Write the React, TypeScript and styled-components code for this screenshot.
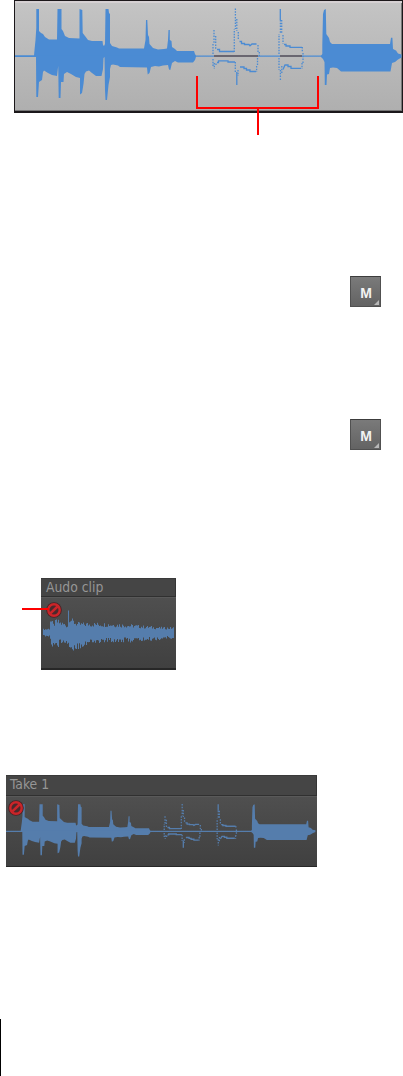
import { Fragment } from 'react'
import styled, { createGlobalStyle } from 'styled-components'

const SOLID_LEFT =
  'M15 55.6H34L34.5 50L35.5 40L36.3 28V9H39V31L41 33L43 34L45 37L49 39.5H57L57.5 9H61.5V29L63 31L65 36L69 38L79.5 38.5V9L82.3 10L82.7 33L85 36L88 40L92 41H102.5L103 45L104 46L105 44L105.5 9H108.5L109 13L110 14V43L112 46L117 47.5L119 48.5H144L145.5 40L146 20H147.3L148 35L149 37L149.5 44L153 48L158 49.5L164 49L167 48.5L168 40L168.5 30H169.8V40L171.5 41L172 47L175 49L177 51H194L195 54L196 55.8V56.8L195 60L193 62.5H178L175 61L172 63L170.3 70L169 69.5L168 65L163 65.5L159 66.5L155 66L151 67L149.5 73L147.7 74.5L147 67.5L120 67L118 65.5L113 64.5L111 65L110 69V77L108.5 85L107 100H105.5L105 90L104.5 57L103.5 58L103 69L101.5 76H96L92 73L89 70.5L86 71.5L84.5 74L83.5 84L82 93L80 94.5V78L76 77L71 74L67 72L64 74L63.5 82H61L60.5 98H58.7L58.2 66L57 76L52 75L48 73L44 70.5L43 72L42 80L39 82L38 97H36.3L36 57H15Z'

const SOLID_RIGHT =
  'M321 55.8L322.3 54V45L323 14L324 10L325.8 9L326.3 34L329 38L330 42L332 44H390L391 37.8H392.4L393 49L396 50.5L398 53.5L401.5 54.5V57.5L398 59.5L395 62L392 63L390.5 71.5H341L337 68L333 67.5L330 68L329 74L327 74.5L326.5 85H324.8L324.5 62L323 59L321 57Z'

const DOTS =
  'M213 54V43.5 M214 30V44 M215.7 36V49 M213 59V66 M214.3 63V69 M216 63.5V66 M234.3 52V29 M235.4 8.5V29 M236.8 19V31 M238.3 32V40 M235.3 62V73 M238 70V76 M258 45V52 M259.3 52V56 M257.5 58V66 M256.6 66V72 M279 54V34 M280.4 20V34 M281.7 20V34 M283 35V44 M279 58V70 M280.4 70V81 M281.8 66V74 M302.3 47V52 M303 53V63 M302 63V69'

const STEPS =
  'M217 49.5H219.5V51.5H234 M239.5 41.5H241.5V43.5H244.5V44.5H249L250 45.8L252 44H256.5 M217 62.5H218.5V60.8H228V62H235 M236.8 72V85 M240 67H244V68.5H246.5V70H250V71.5H256 M280.3 9V20 M284 44.5H286V46H290V47.3H302 M283 69.5L285 65H288V66.5H291V68.3H301'

const MUTED_SPANS = 'M214 56H258 M280 56H302'

const topEnvelope: [number, number][] = [
  [0, 4], [6, 5], [7, 17], [10, 10], [13, 15], [18, 12], [24, 9], [25, 22],
  [27, 19], [29, 15], [34, 11], [57, 11], [77, 10], [97, 8], [117, 6], [131, 6],
]
const bottomEnvelope: [number, number][] = [
  [0, 4], [6, 5], [8, 14], [14, 16], [20, 9], [26, 17], [30, 19], [37, 16],
  [47, 12], [67, 10], [87, 10], [107, 9], [131, 6],
]

const sample = (points: [number, number][], x: number) => {
  const i = Math.max(1, points.findIndex(([px]) => px >= x))
  const [x0, y0] = points[i - 1]
  const [x1, y1] = points[i]
  return y0 + ((y1 - y0) * (x - x0)) / (x1 - x0)
}

const noise = (n: number) => {
  const v = Math.sin(n * 12.9898) * 43758.5453
  return v - Math.floor(v)
}

const noisePath = Array.from({ length: 131 }, (_, x) => {
  const top = sample(topEnvelope, x) * (x === 25 ? 1 : 0.5 + 0.45 * noise(x + 1))
  const bottom = sample(bottomEnvelope, x) * (0.48 + 0.52 * noise(x + 300))
  return `M${x + 0.5} ${(34.5 - top).toFixed(1)}V${(34.5 + bottom).toFixed(1)}`
}).join('')

function TakeWave({ color, muted }: { color: string; muted?: boolean }) {
  return (
    <Fragment>
      <path d={SOLID_LEFT} fill={color} />
      <path d={SOLID_RIGHT} fill={color} />
      <WaveLine d="M15 56.2H322" $color={color} $width={1.2} />
      {muted && <WaveLine d={MUTED_SPANS} $color="#696670" $width={1.8} />}
      <WaveLine d={DOTS} $color={color} $width={1.3} $dotted />
      <WaveLine d={STEPS} $color={color} $width={1.3} />
    </Fragment>
  )
}

function MutedBadge() {
  return (
    <Badge viewBox="0 0 16 16">
      <circle cx="8" cy="8" r="7.8" fill="#492326" />
      <circle cx="8" cy="8" r="5.7" fill="#4a292c" stroke="#cb2529" strokeWidth="2.4" />
      <path d="M4.4 11.4L11.5 4.5" stroke="#cb2529" strokeWidth="2.5" />
    </Badge>
  )
}

function MuteButton() {
  return (
    <Mute type="button">
      M
      <Corner viewBox="0 0 5 5">
        <path d="M5 0V5H0Z" fill="#b8b8b8" />
      </Corner>
    </Mute>
  )
}

export default function App() {
  return (
    <Page>
      <GlobalStyle />
      <EventPanel>
        <Canvas viewBox="15 1 387 110" preserveAspectRatio="none">
          <TakeWave color="#4b8bd3" muted />
        </Canvas>
        <Bracket />
        <BracketStem />
      </EventPanel>
      <ButtonSlot $top={163}>
        <MuteButton />
      </ButtonSlot>
      <ButtonSlot $top={112}>
        <MuteButton />
      </ButtonSlot>
      <Clip $width={135} $height={92} $left={41} $top={128}>
        <ClipTitle $height={19} $inset={5}>Audo clip</ClipTitle>
        <ClipBody>
          <ClipCanvas viewBox="-2 0 135 69">
            <path d="M0 34.5H131" stroke="#557dac" strokeWidth="5" />
            <path d={noisePath} stroke="#557dac" strokeWidth="1.05" />
          </ClipCanvas>
          <BadgeSlot $left={5} $top={4}>
            <MutedBadge />
          </BadgeSlot>
          <Pointer />
        </ClipBody>
      </Clip>
      <Clip $width={311} $height={92} $left={6} $top={105}>
        <ClipTitle $height={21} $inset={4}>Take 1</ClipTitle>
        <ClipBody>
          <ClipCanvas viewBox="0 0 311 69">
            <g transform="translate(-12.6 2.2) scale(0.802 0.572)">
              <TakeWave color="#557dac" />
            </g>
          </ClipCanvas>
          <BadgeSlot $left={2} $top={3}>
            <MutedBadge />
          </BadgeSlot>
        </ClipBody>
      </Clip>
      <MarginRule />
    </Page>
  )
}

const GlobalStyle = createGlobalStyle`
  * {
    box-sizing: border-box;
  }

  body {
    margin: 0;
    background: #fff;
  }
`

const Page = styled.main`
  display: flex;
  flex-direction: column;
  align-items: flex-start;
  width: 403px;
  height: 1076px;
  overflow: hidden;
  background: #fff;
  font-family: 'DejaVu Sans Condensed', 'DejaVu Sans', sans-serif;
`

const EventPanel = styled.section`
  position: relative;
  flex: none;
  width: 389px;
  height: 113px;
  margin-left: 14px;
  border: 1px solid #1b171a;
  border-bottom-width: 2px;
  background: linear-gradient(#c4c4c4, #afafaf);
  box-shadow: inset 0 2px 0 #d5d0d2, inset 0 -1px 0 #777, inset -1px 0 0 #777;
`

const Canvas = styled.svg`
  display: block;
  width: 387px;
  height: 110px;
`

const WaveLine = styled.path<{ $color: string; $width: number; $dotted?: boolean }>`
  fill: none;
  stroke: ${({ $color }) => $color};
  stroke-width: ${({ $width }) => $width}px;
  stroke-dasharray: ${({ $dotted }) => ($dotted ? '1.5 1.3' : 'none')};
  vector-effect: non-scaling-stroke;
`

const Bracket = styled.div`
  position: absolute;
  left: 181px;
  top: 75px;
  width: 123px;
  height: 33px;
  border: 2px solid #fe0000;
  border-top: 0;
`

const BracketStem = styled.div`
  position: absolute;
  left: 242px;
  top: 107px;
  width: 2px;
  height: 27px;
  background: #fe0000;
`

const ButtonSlot = styled.div<{ $top: number }>`
  flex: none;
  align-self: flex-end;
  margin-top: ${({ $top }) => $top}px;
  margin-right: 22px;
`

const Mute = styled.button`
  position: relative;
  display: block;
  width: 31px;
  height: 31px;
  padding: 2px 0 0 1px;
  border: 1px solid #505050;
  border-top-color: #3c3c3c;
  background: linear-gradient(#7a7a7a, #636363);
  color: #f3f3f3;
  font: bold 14px/24px 'Liberation Sans', Arial, sans-serif;
  text-align: center;
`

const Corner = styled.svg`
  position: absolute;
  right: 1px;
  bottom: 1px;
  width: 5px;
  height: 5px;
`

const Clip = styled.section<{ $width: number; $height: number; $left: number; $top: number }>`
  display: flex;
  flex: none;
  flex-direction: column;
  width: ${({ $width }) => $width}px;
  height: ${({ $height }) => $height}px;
  margin-left: ${({ $left }) => $left}px;
  margin-top: ${({ $top }) => $top}px;
  border-bottom: 2px solid #272727;
  background: #454545;
  box-shadow: inset 0 1px 0 #3a3a3a, inset -1px 0 0 #353535;
`

const ClipTitle = styled.header<{ $height: number; $inset: number }>`
  flex: none;
  height: ${({ $height }) => $height}px;
  padding-left: ${({ $inset }) => $inset}px;
  border-bottom: 1px solid #303030;
  color: #969696;
  font-size: 13.8px;
  font-stretch: condensed;
  line-height: 18px;
  white-space: nowrap;
`

const ClipBody = styled.div`
  position: relative;
  flex: 1;
  border-top: 1px solid #595959;
  background: linear-gradient(#4f4f4f, #404040);
`

const ClipCanvas = styled.svg`
  display: block;
  width: 100%;
  height: 69px;
`

const BadgeSlot = styled.div<{ $left: number; $top: number }>`
  position: absolute;
  left: ${({ $left }) => $left}px;
  top: ${({ $top }) => $top}px;
`

const Badge = styled.svg`
  display: block;
  width: 16px;
  height: 16px;
`

const Pointer = styled.div`
  position: absolute;
  left: -19px;
  top: 10px;
  width: 27px;
  height: 2px;
  background: #fe0000;
`

const MarginRule = styled.div`
  flex: none;
  width: 1px;
  height: 57px;
  margin-top: auto;
  background: #000;
`
